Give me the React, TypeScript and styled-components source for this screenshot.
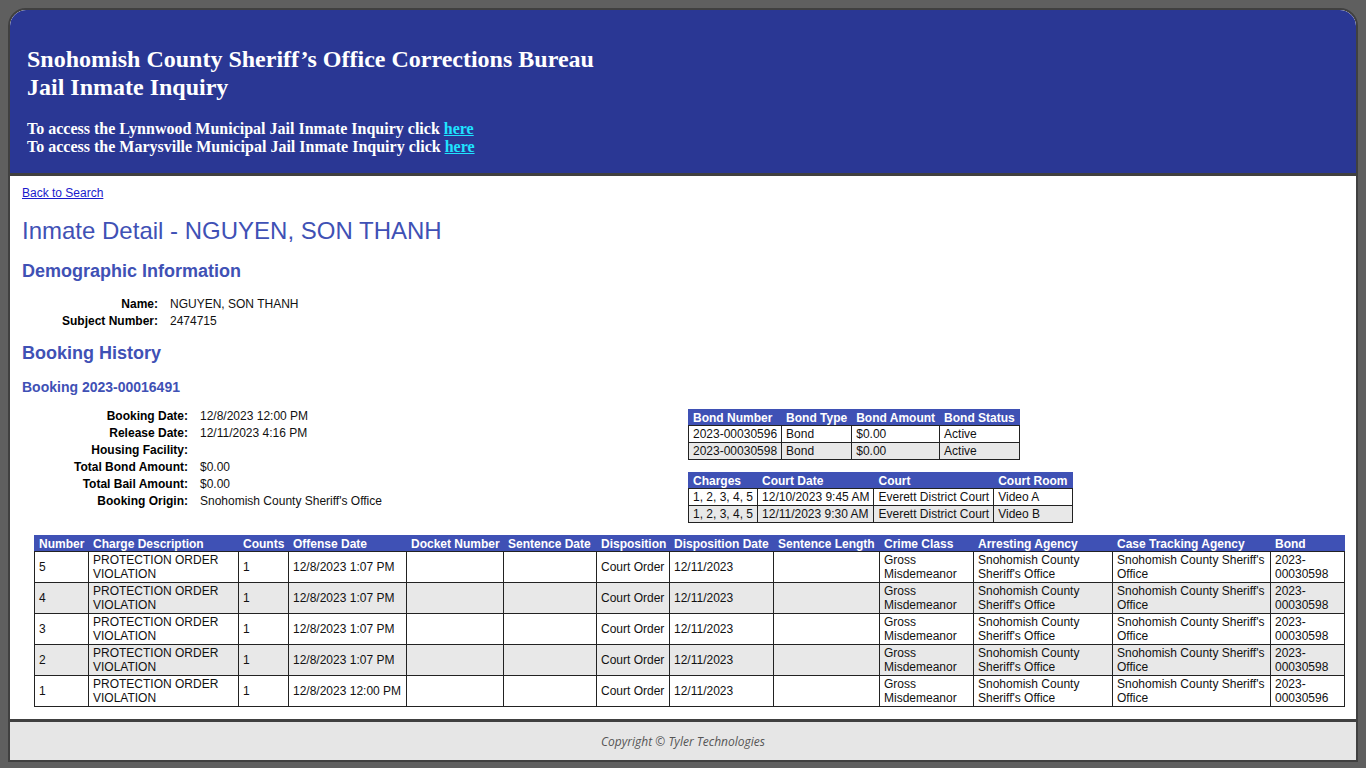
import React from "react";
import styled, { createGlobalStyle } from "styled-components";

const GlobalStyle = createGlobalStyle`
    html, body {
        margin: 0;
        padding: 0;
        background: #5f5f5f;
    }
    body {
        padding: 8px;
        font-family: "Liberation Sans", Arial, sans-serif;
    }
`

const Frame = styled.div`
    border: 2px solid #404040;
    border-radius: 18px 18px 0 0;
    background: #ffffff;
    overflow: hidden;
`

const Banner = styled.header`
    background: #2a3794;
    border-bottom: 3px solid #404040;
    border-radius: 16px 16px 0 0;
    padding: 35px 17px 16px;
    height: 112px;
    color: #ffffff;
    font-family: "Liberation Serif", "Times New Roman", serif;
    font-weight: bold;
`

const BannerTitle = styled.h1`
    margin: 0;
    font-size: 24px;
    line-height: 28px;
    font-weight: bold;
`

const BannerLinks = styled.p`
    margin: 19px 0 0;
    font-size: 16px;
    line-height: 18px;
`

const CyanLink = styled.a`
    color: #1ee3ff;
    text-decoration: underline;
`

const Content = styled.main`
    padding: 10px 12px 12px;
    display: flex;
    flex-direction: column;
    align-items: flex-start;
    color: #000;
`

const BackLink = styled.a`
    display: block;
    font-size: 12px;
    line-height: 14px;
    color: #1a1acc;
    text-decoration: underline;
`

const PageTitle = styled.h1`
    margin: 17px 0 0;
    font-size: 24px;
    line-height: 27px;
    font-weight: normal;
    color: #3f51b5;
`

const SectionTitle = styled.h2<{ $gap: number }>`
    margin: ${p => p.$gap}px 0 0;
    font-size: 18px;
    line-height: 21px;
    font-weight: bold;
    color: #3f51b5;
`

const SubTitle = styled.h3`
    margin: 15px 0 0;
    font-size: 14px;
    line-height: 16px;
    font-weight: bold;
    color: #3f51b5;
`

const Details = styled.div<{ $indent: number; $gap: number }>`
    display: grid;
    grid-template-columns: 136px auto;
    grid-auto-rows: 17px;
    align-self: start;
    column-gap: 12px;
    margin: ${p => p.$gap}px 0 0 ${p => p.$indent}px;
    font-size: 12px;
    line-height: 17px;
`

const Label = styled.span`
    text-align: right;
    font-weight: bold;
`

const Value = styled.span`
    color: #111;
`

const BookingGrid = styled.div`
    display: grid;
    grid-template-columns: 666px auto;
    align-items: start;
    margin-top: 13px;
    width: 100%;
`

const SideTables = styled.div`
    display: flex;
    flex-direction: column;
    align-items: flex-start;
    gap: 12px;
    padding-top: 1px;
`

const Table = styled.table<{ $fixed?: boolean }>`
    border-collapse: collapse;
    font-size: 12px;
    line-height: 14px;
    table-layout: ${p => (p.$fixed ? "fixed" : "auto")};
    width: ${p => (p.$fixed ? "1310px" : "auto")};
`

const HeadRow = styled.tr`
    background: #3f51b5;
    color: #ffffff;
`

const Th = styled.th`
    text-align: left;
    font-weight: bold;
    padding: 1px 4px 0;
    height: 14px;
    white-space: nowrap;
    border: 1px solid #3f51b5;
    border-bottom-color: #222;
`

const BodyRow = styled.tr<{ $alt: boolean }>`
    background: ${p => (p.$alt ? "#e8e8e8" : "#ffffff")};
`

const Td = styled.td<{ $tall?: boolean }>`
    border: 1px solid #222;
    padding: 1px 4px;
    height: ${p => (p.$tall ? "28px" : "14px")};
    vertical-align: middle;
    color: #111;
`

const Footer = styled.footer`
    background: #e6e6e6;
    border-top: 3px solid #404040;
    height: 38px;
    display: flex;
    align-items: center;
    justify-content: center;
    font-family: "Open Sans", sans-serif;
    font-style: italic;
    font-size: 12px;
    color: #555;
`

const bonds = [
    ["2023-00030596", "Bond", "$0.00", "Active"],
    ["2023-00030598", "Bond", "$0.00", "Active"],
]

const courts = [
    ["1, 2, 3, 4, 5", "12/10/2023 9:45 AM", "Everett District Court", "Video A"],
    ["1, 2, 3, 4, 5", "12/11/2023 9:30 AM", "Everett District Court", "Video B"],
]

const chargeCols = [54, 150, 50, 118, 97, 93, 73, 104, 106, 94, 139, 158, 74]
const chargeHeads = [
    "Number", "Charge Description", "Counts", "Offense Date", "Docket Number",
    "Sentence Date", "Disposition", "Disposition Date", "Sentence Length",
    "Crime Class", "Arresting Agency", "Case Tracking Agency", "Bond",
]

const charges = [
    ["5", "12/8/2023 1:07 PM", "2023-00030598"],
    ["4", "12/8/2023 1:07 PM", "2023-00030598"],
    ["3", "12/8/2023 1:07 PM", "2023-00030598"],
    ["2", "12/8/2023 1:07 PM", "2023-00030598"],
    ["1", "12/8/2023 12:00 PM", "2023-00030596"],
]

const booking: [string, string][] = [
    ["Booking Date:", "12/8/2023 12:00 PM"],
    ["Release Date:", "12/11/2023 4:16 PM"],
    ["Housing Facility:", ""],
    ["Total Bond Amount:", "$0.00"],
    ["Total Bail Amount:", "$0.00"],
    ["Booking Origin:", "Snohomish County Sheriff's Office"],
]

function SmallTable({ heads, rows }: { heads: string[]; rows: string[][] }) {
    return (
        <Table>
            <thead>
                <HeadRow>
                    {heads.map(h => <Th key={h}>{h}</Th>)}
                </HeadRow>
            </thead>
            <tbody>
                {rows.map((r, i) => (
                    <BodyRow key={i} $alt={i % 2 === 1}>
                        {r.map((c, j) => <Td key={j}>{c}</Td>)}
                    </BodyRow>
                ))}
            </tbody>
        </Table>
    )
}

export default function App() {
    return (
        <>
            <GlobalStyle/>
            <Frame>
                <Banner>
                    <BannerTitle>
                        Snohomish County Sheriff’s Office Corrections Bureau<br/>
                        Jail Inmate Inquiry
                    </BannerTitle>
                    <BannerLinks>
                        To access the Lynnwood Municipal Jail Inmate Inquiry click <CyanLink href="#">here</CyanLink><br/>
                        To access the Marysville Municipal Jail Inmate Inquiry click <CyanLink href="#">here</CyanLink>
                    </BannerLinks>
                </Banner>
                <Content>
                    <BackLink href="#">Back to Search</BackLink>
                    <PageTitle>Inmate Detail - NGUYEN, SON THANH</PageTitle>
                    <SectionTitle $gap={17}>Demographic Information</SectionTitle>
                    <Details $indent={0} $gap={14}>
                        <Label>Name:</Label><Value>NGUYEN, SON THANH</Value>
                        <Label>Subject Number:</Label><Value>2474715</Value>
                    </Details>
                    <SectionTitle $gap={13}>Booking History</SectionTitle>
                    <SubTitle>Booking 2023-00016491</SubTitle>
                    <BookingGrid>
                        <Details $indent={30} $gap={0}>
                            {booking.map(([l, v]) => (
                                <React.Fragment key={l}>
                                    <Label>{l}</Label><Value>{v}</Value>
                                </React.Fragment>
                            ))}
                        </Details>
                        <SideTables>
                            <SmallTable heads={["Bond Number", "Bond Type", "Bond Amount", "Bond Status"]} rows={bonds}/>
                            <SmallTable heads={["Charges", "Court Date", "Court", "Court Room"]} rows={courts}/>
                        </SideTables>
                    </BookingGrid>
                    <Table $fixed style={{ marginTop: 12, marginLeft: 12 }}>
                        <colgroup>
                            {chargeCols.map((w, i) => <col key={i} style={{ width: w }}/>)}
                        </colgroup>
                        <thead>
                            <HeadRow>
                                {chargeHeads.map(h => <Th key={h}>{h}</Th>)}
                            </HeadRow>
                        </thead>
                        <tbody>
                            {charges.map(([num, date, bond], i) => (
                                <BodyRow key={num} $alt={i % 2 === 1}>
                                    <Td $tall>{num}</Td>
                                    <Td $tall>PROTECTION ORDER VIOLATION</Td>
                                    <Td $tall>1</Td>
                                    <Td $tall>{date}</Td>
                                    <Td $tall></Td>
                                    <Td $tall></Td>
                                    <Td $tall>Court Order</Td>
                                    <Td $tall>12/11/2023</Td>
                                    <Td $tall></Td>
                                    <Td $tall>Gross Misdemeanor</Td>
                                    <Td $tall>Snohomish County Sheriff's Office</Td>
                                    <Td $tall>Snohomish County Sheriff's Office</Td>
                                    <Td $tall>{bond}</Td>
                                </BodyRow>
                            ))}
                        </tbody>
                    </Table>
                </Content>
                <Footer>Copyright © Tyler Technologies</Footer>
            </Frame>
        </>
    )
}
